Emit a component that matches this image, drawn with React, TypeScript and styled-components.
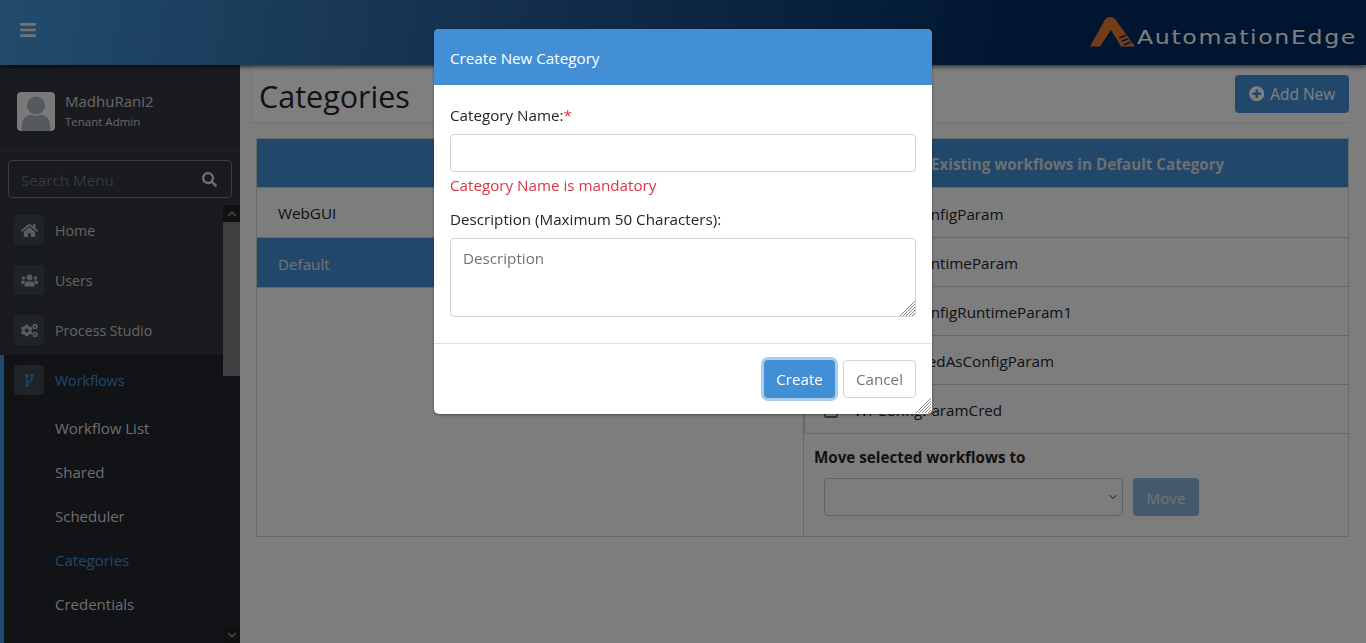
import React from 'react';
import styled, { createGlobalStyle } from 'styled-components';
import { FaBars, FaChevronDown, FaChevronUp, FaCogs, FaHome, FaPlusCircle, FaSearch, FaUsers } from 'react-icons/fa';
import { ChevronDown } from 'lucide-react';

const GlobalStyle = createGlobalStyle`
  html, body {
    margin: 0;
    height: 100%;
    overflow: hidden;
    background: #fafafa;
    font-family: "Open Sans", "Noto Sans", sans-serif;
    font-size: 15.2px;
    color: #212529;
  }
  * { box-sizing: border-box; }
`;

const Page = styled.div`
  height: 643px;
  display: flex;
  flex-direction: column;
`;

const Header = styled.header`
  flex: 0 0 65px;
  display: flex;
  align-items: center;
  justify-content: space-between;
  padding: 0 10px 5px 19px;
  background: linear-gradient(100deg, #4497d8 0%, #2c66a0 32%, #002a60 76%);
  color: #fff;
  box-shadow: 0 2px 4px rgba(0, 0, 0, 0.6);
  position: relative;
  z-index: 2;
`;

const MenuButton = styled.div`
  display: flex;
  color: #e6e6e6;
  font-size: 18px;
`;

const Logo = styled.div`
  display: flex;
  align-items: flex-end;
  gap: 1px;
  height: 34px;
`;

const LogoText = styled.span`
  width: 185px;
  margin: 0 34px -3px 0;
  transform: scaleX(1.245);
  transform-origin: left bottom;
  white-space: nowrap;
  font-family: "DejaVu Sans", sans-serif;
  font-size: 19px;
  line-height: 25px;
  letter-spacing: 1.3px;
  color: #fff;
`;

const Body = styled.div`
  flex: 1;
  min-height: 0;
  display: flex;
`;

const Sidebar = styled.aside`
  flex: 0 0 240px;
  display: flex;
  flex-direction: column;
  background: #32363f;
  color: #d8d8d8;
  overflow: hidden;
`;

const Profile = styled.div`
  flex: 0 0 87px;
  display: flex;
  align-items: center;
  gap: 10px;
  padding: 6px 17px 0;
  border-bottom: 1px solid #3e424b;
`;

const Avatar = styled.div`
  width: 38px;
  height: 39px;
  border-radius: 4px;
  overflow: hidden;
  background: #f2f2f2;
  display: flex;
`;

const ProfileName = styled.div`
  font-size: 15px;
  line-height: 20px;
  color: #cfcfcf;
`;

const ProfileRole = styled.div`
  margin-top: 1px;
  font-size: 11.5px;
  line-height: 20px;
  color: #cfcfcf;
`;

const SearchBox = styled.div`
  flex: 0 0 38px;
  margin: 8px 8px 7px;
  display: flex;
  align-items: center;
  justify-content: space-between;
  padding: 1px 14px 0 12px;
  border: 1px solid #7a7d84;
  border-radius: 4px;
  color: #6f727a;
`;

const SearchIcon = styled.span`
  display: flex;
  color: #dcdcdc;
  font-size: 15px;
`;

const NavArea = styled.div`
  flex: 1;
  min-height: 0;
  display: flex;
`;

const NavList = styled.nav`
  flex: 1;
  min-width: 0;
`;

const NavItem = styled.div<{ $active?: boolean }>`
  height: 50px;
  display: flex;
  align-items: center;
  gap: 11px;
  padding-left: 14px;
  font-size: 14.2px;
  color: ${(p) => (p.$active ? '#3f92de' : '#c8c8c8')};
`;

const NavIcon = styled.span<{ $active?: boolean }>`
  width: 30px;
  height: 30px;
  border-radius: 4px;
  display: flex;
  align-items: center;
  justify-content: center;
  background: #40464f;
  color: ${(p) => (p.$active ? '#3f92de' : '#b8b8b8')};
`;

const NavGroup = styled.div`
  background: #22262d;
  border-left: 4px solid #3f92de;
`;

const GroupHead = styled(NavItem)`
  padding-left: 10px;
`;

const SubList = styled.div`
  padding: 1px 0 0 51px;
`;

const SubItem = styled.div<{ $active?: boolean }>`
  height: 44px;
  display: flex;
  align-items: center;
  white-space: nowrap;
  font-size: 15px;
  color: ${(p) => (p.$active ? '#3f92de' : '#dcdcdc')};
`;

const ScrollBar = styled.div`
  flex: 0 0 17px;
  display: flex;
  flex-direction: column;
  background: #22262d;
`;

const ScrollButton = styled.div`
  flex: 0 0 17px;
  display: flex;
  align-items: center;
  justify-content: center;
  font-size: 10px;
  background: #1e2025;
  color: #8a8a8a;
`;

const ScrollThumb = styled.div`
  flex: 0 0 154px;
  background: #7d7e82;
`;

const ScrollRest = styled.div`
  flex: 1;
`;

const Main = styled.main`
  flex: 1;
  min-width: 0;
  padding: 0 17px 0 11px;
`;

const TitleBar = styled.div`
  height: 58px;
  display: flex;
  align-items: center;
  justify-content: space-between;
  padding: 0 0 0 7px;
  background: #fff;
  border-bottom: 1px solid #e6e6e6;
  border-left: 1px solid #efefef;
`;

const Title = styled.h1`
  margin: 4px 0 0;
  font-size: 30.5px;
  font-weight: 400;
  color: #212529;
`;

const AddButton = styled.button`
  width: 114px;
  height: 38px;
  display: flex;
  align-items: center;
  justify-content: center;
  gap: 6px;
  border: 0;
  border-radius: 4px;
  background: #428fd6;
  color: #fff;
  font-family: inherit;
  font-size: 15.5px;
`;

const Panel = styled.section`
  margin: 15px 0 0 5px;
  height: 399px;
  display: flex;
  border: 1px solid #d2d2d2;
`;

const LeftColumn = styled.div`
  flex: 0 0 547px;
  border-right: 1px solid #cfcfcf;
`;

const RightColumn = styled.div`
  flex: 1;
  min-width: 0;
`;

const ColumnHead = styled.div`
  height: 49px;
  display: flex;
  align-items: center;
  padding: 2px 0 0 127px;
  background: #428fd6;
  color: #ddd;
  font-weight: 700;
  border-bottom: 1px solid #cfcfcf;
`;

const CategoryRow = styled.div<{ $selected?: boolean }>`
  height: 50px;
  display: flex;
  align-items: center;
  padding: ${(p) => (p.$selected ? '2px' : '0')} 0 0 21px;
  border-bottom: 1px solid #d0d0d0;
  background: ${(p) => (p.$selected ? '#428fd6' : 'transparent')};
  color: ${(p) => (p.$selected ? '#e6e6e6' : '#212529')};
`;

const WorkflowList = styled.div`
  margin-top: 1px;
`;

const WorkflowRow = styled.label`
  height: 49px;
  display: flex;
  align-items: center;
  gap: 16px;
  padding: 2px 0 0 19px;
  border-bottom: 1px solid #d0d0d0;
  border-left: 1px solid #d0d0d0;
`;

const CheckBox = styled.input`
  margin: 2px 0 0;
  width: 14px;
  height: 14px;
  appearance: none;
  border: 2px solid #6d6d6d;
  border-radius: 2px;
`;

const MoveTitle = styled.div`
  padding: 13px 0 0 10px;
  height: 40px;
  font-weight: 700;
  line-height: 20px;
`;

const MoveRow = styled.div`
  display: flex;
  align-items: center;
  gap: 10px;
  padding: 4px 0 0 20px;
`;

const SelectWrap = styled.div`
  position: relative;
  display: flex;
  color: #212529;
`;

const SelectArrow = styled.span`
  position: absolute;
  top: 13px;
  right: 4px;
  display: flex;
  pointer-events: none;
`;

const MoveSelect = styled.select`
  appearance: none;
  width: 299px;
  height: 38px;
  background: transparent;
  border: 1px solid #c8c8c8;
  border-radius: 4px;
  padding: 0 10px;
`;

const MoveButton = styled.button`
  width: 66px;
  height: 38px;
  padding-top: 2px;
  border: 0;
  border-radius: 4px;
  background: #8ab3d9;
  color: #e4e4e4;
  font-family: inherit;
  font-size: 15.2px;
`;

const Backdrop = styled.div`
  position: fixed;
  inset: 0;
  z-index: 10;
  background: rgba(0, 0, 0, 0.5);
`;

const Modal = styled.div`
  position: fixed;
  z-index: 11;
  top: 29px;
  left: 434px;
  width: 498px;
  height: 385px;
  display: flex;
  flex-direction: column;
  background: #fff;
  border-radius: 5px;
  overflow: hidden;
  box-shadow: 0 1px 3px rgba(0, 0, 0, 0.4);
`;

const ModalHead = styled.div`
  flex: 0 0 56px;
  display: flex;
  align-items: center;
  padding: 1px 0 0 16px;
  background: #428fd6;
  color: #fff;
`;

const ModalBody = styled.div`
  flex: 0 0 259px;
  padding: 20px 16px 0;
  border-bottom: 1px solid #dee2e6;
`;

const FieldLabel = styled.label`
  display: block;
  line-height: 20px;
  color: #212529;
`;

const Required = styled.span`
  color: #dc3545;
`;

const NameInput = styled.input`
  display: block;
  width: 100%;
  height: 38px;
  margin-top: 9px;
  border: 1px solid #ced4da;
  border-radius: 4px;
`;

const ErrorText = styled.div`
  margin: 3px 0 13px;
  line-height: 21px;
  color: #dc3545;
`;

const TextareaWrap = styled.div`
  position: relative;
  margin-top: 9px;
`;

const DescInput = styled.textarea`
  display: block;
  width: 100%;
  height: 79px;
  padding: 9px 12px;
  border: 1px solid #ced4da;
  border-radius: 4px;
  resize: none;
  font-family: inherit;
  font-size: 15.2px;
  &::placeholder { color: #6c757d; opacity: 1; }
`;

const ModalFoot = styled.div`
  flex: 1;
  display: flex;
  justify-content: flex-end;
  gap: 8px;
  padding: 16px 16px 0;
`;

const CreateButton = styled.button`
  width: 71px;
  height: 38px;
  border: 0;
  border-radius: 4px;
  background: #428fd6;
  color: #fff;
  font-family: inherit;
  font-size: 15.2px;
  box-shadow: 0 0 0 3px #a9cdee;
`;

const CancelButton = styled.button`
  width: 73px;
  height: 38px;
  border: 1px solid #ced4da;
  border-radius: 4px;
  background: #fff;
  color: #6c757d;
  font-family: inherit;
  font-size: 15.2px;
`;

const GripSvg = styled.svg<{ $inset: number }>`
  position: absolute;
  right: ${(p) => p.$inset}px;
  bottom: ${(p) => p.$inset}px;
  pointer-events: none;
`;

const Grip: React.FC<{ inset: number }> = ({ inset }) => (
  <GripSvg $inset={inset} width="15" height="15" viewBox="0 0 15 15">
    <path d="M0 15 L15 0 M3 15 L15 3 M6 15 L15 6 M9 15 L15 9 M12 15 L15 12" stroke="#8c8c8c" strokeWidth="1" fill="none" />
  </GripSvg>
);

const workflows = ['Test_WFConfigParam', 'Test_WFRuntimeParam', 'Test_WFConfigRuntimeParam1', 'Test_WFCredAsConfigParam', 'Wf ConfigParamCred'];
const subItems = ['Workflow List', 'Shared', 'Scheduler', 'Categories', 'Credentials', 'Validate Checksum'];

const App: React.FC = () => {
  return (
    <>
      <GlobalStyle />
      <Page>
        <Header>
          <MenuButton><FaBars /></MenuButton>
          <Logo>
            <svg width="46" height="30" viewBox="0 0 46 30">
              <path d="M0 29.5 L15 2.5 Q16.5 0 19.5 0 L21.5 0 Q24 0 25.5 2.5 L45 29.5 L31 29.5 L21 13 L10 29.5 Z" fill="#e87a30" />
              <path d="M29.3 21 L35.7 18.3 M31.7 24.3 L38.3 21.7 M34 27.7 L41 25" stroke="#002a60" strokeWidth="1.5" />
            </svg>
            <LogoText>AutomationEdge</LogoText>
          </Logo>
        </Header>
        <Body>
          <Sidebar>
            <Profile>
              <Avatar>
                <svg width="38" height="39" viewBox="0 0 38 39">
                  <circle cx="19" cy="13.5" r="9" fill="#aab0b8" />
                  <path d="M5 39 L5 33 Q5 24 15 22.5 Q19 25.5 23 22.5 Q33 24 33 33 L33 39 Z" fill="#aab0b8" />
                </svg>
              </Avatar>
              <div>
                <ProfileName>MadhuRani2</ProfileName>
                <ProfileRole>Tenant Admin</ProfileRole>
              </div>
            </Profile>
            <SearchBox>
              Search Menu
              <SearchIcon><FaSearch /></SearchIcon>
            </SearchBox>
            <NavArea>
              <NavList>
                <NavItem><NavIcon><FaHome size={17} /></NavIcon>Home</NavItem>
                <NavItem><NavIcon><FaUsers size={17} /></NavIcon>Users</NavItem>
                <NavItem><NavIcon><FaCogs size={17} /></NavIcon>Process Studio</NavItem>
                <NavGroup>
                  <GroupHead $active>
                    <NavIcon $active>
                      <svg width="9" height="13" viewBox="0 0 9 13" fill="none" stroke="currentColor" strokeWidth="1.4">
                        <path d="M2 2.5 L2 10.5 M7 2.5 Q7.5 7 2.2 8.5" />
                        <circle cx="2" cy="1.6" r="1" />
                        <circle cx="2" cy="11.4" r="1" />
                        <circle cx="7" cy="1.6" r="1" />
                      </svg>
                    </NavIcon>
                    Workflows
                  </GroupHead>
                  <SubList>
                    {subItems.map((s) => (
                      <SubItem key={s} $active={s === 'Categories'}>{s}</SubItem>
                    ))}
                  </SubList>
                </NavGroup>
              </NavList>
              <ScrollBar>
                <ScrollButton><FaChevronUp /></ScrollButton>
                <ScrollThumb />
                <ScrollRest />
                <ScrollButton><FaChevronDown /></ScrollButton>
              </ScrollBar>
            </NavArea>
          </Sidebar>
          <Main>
            <TitleBar>
              <Title>Categories</Title>
              <AddButton><FaPlusCircle />Add New</AddButton>
            </TitleBar>
            <Panel>
              <LeftColumn>
                <ColumnHead />
                <CategoryRow>WebGUI</CategoryRow>
                <CategoryRow $selected>Default</CategoryRow>
              </LeftColumn>
              <RightColumn>
                <ColumnHead>Existing workflows in Default Category</ColumnHead>
                <WorkflowList>
                  {workflows.map((w) => (
                    <WorkflowRow key={w}><CheckBox type="checkbox" />{w}</WorkflowRow>
                  ))}
                </WorkflowList>
                <MoveTitle>Move selected workflows to</MoveTitle>
                <MoveRow>
                  <SelectWrap>
                    <MoveSelect />
                    <SelectArrow><ChevronDown size={12} strokeWidth={2} /></SelectArrow>
                  </SelectWrap>
                  <MoveButton>Move</MoveButton>
                </MoveRow>
              </RightColumn>
            </Panel>
          </Main>
        </Body>
      </Page>
      <Backdrop />
      <Modal>
        <ModalHead>Create New Category</ModalHead>
        <ModalBody>
          <FieldLabel>Category Name:<Required>*</Required></FieldLabel>
          <NameInput />
          <ErrorText>Category Name is mandatory</ErrorText>
          <FieldLabel>Description (Maximum 50 Characters):</FieldLabel>
          <TextareaWrap>
            <DescInput placeholder="Description" />
            <Grip inset={1} />
          </TextareaWrap>
        </ModalBody>
        <ModalFoot>
          <CreateButton>Create</CreateButton>
          <CancelButton>Cancel</CancelButton>
        </ModalFoot>
        <Grip inset={1} />
      </Modal>
    </>
  );
};

export default App;
